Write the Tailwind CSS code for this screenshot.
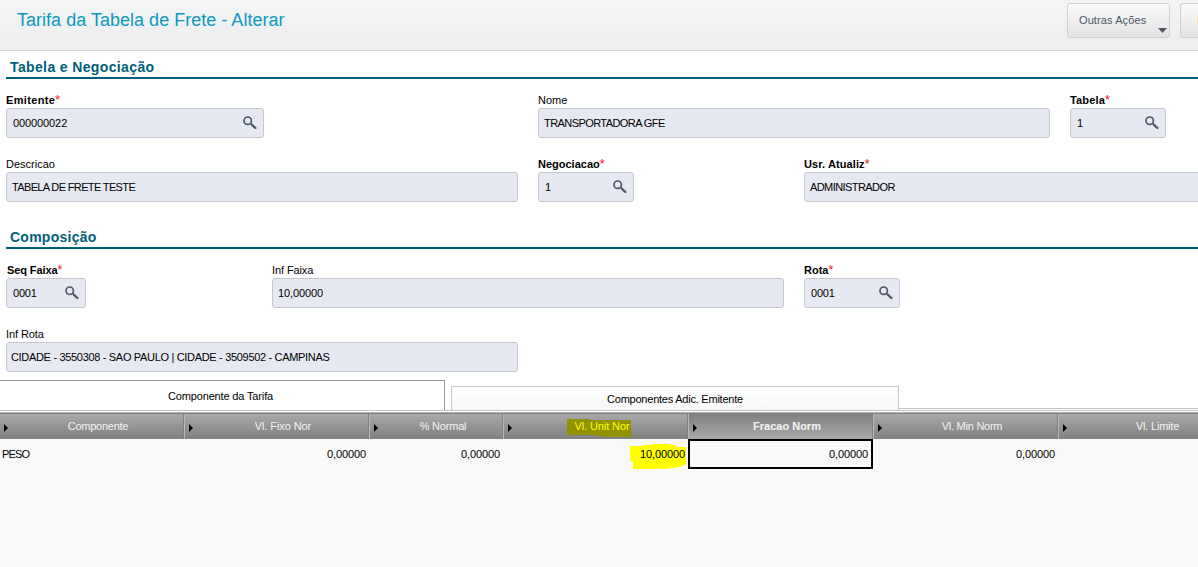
<!DOCTYPE html>
<html lang="pt-BR">
<head>
  <meta charset="UTF-8" />
  <meta name="viewport" content="width=device-width, initial-scale=1.0"/>
  <title>Tarifa da Tabela de Frete - Alterar</title>
  <script src="https://cdn.jsdelivr.net/npm/@tailwindcss/browser@4"></script>
</head>
<body class="w-[1198px] h-[567px] overflow-hidden bg-white text-black text-[11px] leading-[15px] font-['Liberation_Sans',Arial,sans-serif]">

  <!-- Lupa shared by the lookup fields -->
  <svg class="hidden">
    <symbol id="lupa" viewBox="0 0 14 14">
      <circle cx="4.7" cy="4.7" r="3.7" fill="none" stroke="#4d586a" stroke-width="1.7"/>
      <path d="M7.6 7.5 L9 8.9" fill="none" stroke="#4d586a" stroke-width="1.6"/>
      <path d="M9 8.8 L12.4 12" fill="none" stroke="#4d586a" stroke-width="2.3" stroke-linecap="round"/>
    </symbol>
  </svg>

  <div class="flex flex-col h-full overflow-hidden">

    <!-- Header -->
    <header class="h-[51px] shrink-0 flex justify-between border-b border-[#d5d6d7] bg-gradient-to-b from-[#f4f5f5] to-[#ecedee]">
      <h1 class="pl-[17px] pt-[8px] text-[18px] leading-6 tracking-[0.02px] text-[#0c9abe] whitespace-nowrap">Tarifa da Tabela de Frete - Alterar</h1>
      <div class="flex gap-[10px] pt-[3px]">
        <button class="relative w-[103px] h-[35px] border border-[#d0d1d2] rounded-[3px] bg-gradient-to-b from-[#fbfbfb] to-[#e3e3e3] text-[#4c5664] text-left pl-[11px] pb-px tracking-[0.1px] whitespace-nowrap">
          Outras Ações
          <svg class="absolute right-[2px] bottom-[4px] w-[9px] h-[5px]" viewBox="0 0 9 5"><path d="M0 0H9L4.5 5Z" fill="#4c5664"/></svg>
        </button>
        <div class="w-[18px] h-[35px] border border-r-0 border-[#d0d1d2] rounded-l-[3px] bg-gradient-to-b from-[#fbfbfb] to-[#e3e3e3] flex justify-end items-center">
          <span class="w-px h-[8px] mb-px bg-[#f5dfb0]"></span>
        </div>
      </div>
    </header>

    <!-- Tabela e Negociação -->
    <section class="pl-[6px] shrink-0 overflow-hidden">
      <h2 class="h-[28px] pt-[8px] pl-[4px] border-b-2 border-[#006078] text-[#006078] text-[14px] leading-4 tracking-[0.37px] font-bold">Tabela e Negociação</h2>

      <div class="grid grid-cols-[repeat(5,266px)] pt-[14px]">
        <div class="col-span-2">
          <label class="block h-[15px] font-bold tracking-[0.35px]">Emitente<span class="text-[12.5px] font-normal text-[#ff0020]">*</span></label>
          <div class="w-[258px] h-[30px] flex items-center justify-between pl-[6px] pr-[6px] border border-[#c3c8cc] rounded-[3px] bg-[#e6e9f1]">
            <span class="tracking-[-0.1px]">000000022</span>
            <svg class="w-[14px] h-[14px] mb-px"><use href="#lupa"/></svg>
          </div>
        </div>
        <div class="col-span-2">
          <label class="block h-[15px]">Nome</label>
          <div class="w-[512px] h-[30px] flex items-center pl-[5px] border border-[#c3c8cc] rounded-[3px] bg-[#e6e9f1] tracking-[-0.57px]">TRANSPORTADORA GFE</div>
        </div>
        <div>
          <label class="block h-[15px] font-bold tracking-[0.15px]">Tabela<span class="text-[12.5px] font-normal text-[#ff0020]">*</span></label>
          <div class="w-[96px] h-[30px] flex items-center justify-between pl-[6px] pr-[6px] border border-[#c3c8cc] rounded-[3px] bg-[#e6e9f1]">
            <span>1</span>
            <svg class="w-[14px] h-[14px] mb-px"><use href="#lupa"/></svg>
          </div>
        </div>
      </div>

      <div class="grid grid-cols-[repeat(5,266px)] pt-[19px]">
        <div class="col-span-2">
          <label class="block h-[15px]">Descricao</label>
          <div class="w-[512px] h-[30px] flex items-center pl-[5px] border border-[#c3c8cc] rounded-[3px] bg-[#e6e9f1] tracking-[-0.64px]">TABELA DE FRETE TESTE</div>
        </div>
        <div>
          <label class="block h-[15px] font-bold">Negociacao<span class="text-[12.5px] font-normal text-[#ff0020]">*</span></label>
          <div class="w-[96px] h-[30px] flex items-center justify-between pl-[6px] pr-[6px] border border-[#c3c8cc] rounded-[3px] bg-[#e6e9f1]">
            <span>1</span>
            <svg class="w-[14px] h-[14px] mb-px"><use href="#lupa"/></svg>
          </div>
        </div>
        <div class="col-span-2">
          <label class="block h-[15px] font-bold tracking-[0.1px]">Usr. Atualiz<span class="text-[12.5px] font-normal text-[#ff0020]">*</span></label>
          <div class="w-[512px] h-[30px] flex items-center pl-[5px] border border-[#c3c8cc] rounded-[3px] bg-[#e6e9f1] tracking-[-0.58px]">ADMINISTRADOR</div>
        </div>
      </div>
    </section>

    <!-- Composição -->
    <section class="pl-[6px] shrink-0 overflow-hidden">
      <h2 class="h-[47px] pt-[27px] pl-[4px] border-b-2 border-[#006078] text-[#006078] text-[14px] leading-4 tracking-[0.25px] font-bold">Composição</h2>

      <div class="grid grid-cols-[repeat(5,266px)] pt-[14px]">
        <div>
          <label class="block h-[15px] pl-px font-bold tracking-[-0.1px]">Seq Faixa<span class="text-[12.5px] font-normal text-[#ff0020]">*</span></label>
          <div class="w-[80px] h-[30px] flex items-center justify-between pl-[6px] pr-[6px] border border-[#c3c8cc] rounded-[3px] bg-[#e6e9f1]">
            <span class="tracking-[-0.2px]">0001</span>
            <svg class="w-[14px] h-[14px] mb-px"><use href="#lupa"/></svg>
          </div>
        </div>
        <div class="col-span-2">
          <label class="block h-[15px] tracking-[-0.1px]">Inf Faixa</label>
          <div class="w-[512px] h-[30px] flex items-center pl-[5px] border border-[#c3c8cc] rounded-[3px] bg-[#e6e9f1] tracking-[-0.1px]">10,00000</div>
        </div>
        <div>
          <label class="block h-[15px] font-bold">Rota<span class="text-[12.5px] font-normal text-[#ff0020]">*</span></label>
          <div class="w-[96px] h-[30px] flex items-center justify-between pl-[6px] pr-[6px] border border-[#c3c8cc] rounded-[3px] bg-[#e6e9f1]">
            <span class="tracking-[-0.2px]">0001</span>
            <svg class="w-[14px] h-[14px] mb-px"><use href="#lupa"/></svg>
          </div>
        </div>
      </div>

      <div class="pt-[19px]">
        <label class="block h-[15px] tracking-[-0.1px]">Inf Rota</label>
        <div class="w-[512px] h-[30px] flex items-center pl-[4px] border border-[#c3c8cc] rounded-[3px] bg-[#e6e9f1] tracking-[-0.32px]">CIDADE - 3550308 - SAO PAULO | CIDADE - 3509502 - CAMPINAS</div>
      </div>
    </section>

    <!-- Tabs -->
    <nav class="mt-[8px] h-[31px] shrink-0 flex items-end border-b border-[#c4c4c4]">
      <div class="w-[445px] h-[30px] mr-[6px] pt-[2px] flex items-center justify-center border-t border-r border-[#969696] pr-[3px] bg-white tracking-[-0.15px]">Componente da Tarifa</div>
      <div class="w-[448px] h-[24px] pt-[2px] flex items-center justify-center border border-b-0 border-[#c8c8c8] bg-gradient-to-b from-white to-[#f7f7f7] tracking-[-0.23px]">Componentes Adic. Emitente</div>
      <div class="flex-1 h-[2px] border-t border-[#c4c4c4]"></div>
    </nav>

    <!-- Grid -->
    <div class="flex-1 mt-px flex flex-col overflow-hidden bg-[#f9f9f9]">
      <div class="h-[27px] shrink-0 grid grid-cols-[184px_185px_134px_185px_185px_185px_187px] border-t border-[#b0b0b0] text-[#f4f4f4]">
        <div class="flex items-center border-t border-r border-[#808080] bg-gradient-to-b from-[#a9a9a9] to-[#808080] pl-[4px]">
          <svg class="w-[4px] h-[8px] mt-[2px]" viewBox="0 0 4 8"><path d="M0 0L4 4L0 8Z"/></svg>
          <span class="flex-1 text-center pl-[5px] tracking-[-0.25px]">Componente</span>
        </div>
        <div class="flex items-center border-t border-r border-[#808080] bg-gradient-to-b from-[#a9a9a9] to-[#808080]">
          <i class="w-px h-full bg-[#b8b8b8]"></i>
          <svg class="w-[4px] h-[8px] mt-[2px] ml-[4px]" viewBox="0 0 4 8"><path d="M0 0L4 4L0 8Z"/></svg>
          <span class="flex-1 text-center pl-[5px] tracking-[-0.1px]">Vl. Fixo Nor</span>
        </div>
        <div class="flex items-center border-t border-r border-[#808080] bg-gradient-to-b from-[#a9a9a9] to-[#808080]">
          <i class="w-px h-full bg-[#b8b8b8]"></i>
          <svg class="w-[4px] h-[8px] mt-[2px] ml-[4px]" viewBox="0 0 4 8"><path d="M0 0L4 4L0 8Z"/></svg>
          <span class="flex-1 text-center pl-[6px] tracking-[-0.2px]">% Normal</span>
        </div>
        <div class="flex items-center border-t border-r border-[#808080] bg-gradient-to-b from-[#a9a9a9] to-[#808080]">
          <i class="w-px h-full bg-[#b8b8b8]"></i>
          <svg class="w-[4px] h-[8px] mt-[2px] ml-[4px]" viewBox="0 0 4 8"><path d="M0 0L4 4L0 8Z"/></svg>
          <span class="flex-1 flex justify-center pl-[5px] tracking-[-0.1px]">
            <span class="relative text-[#ffff00]">
              <svg class="absolute -left-[7px] top-0 w-[64px] h-[19px]" viewBox="0 0 64 19"><path d="M0 0H23V1H64V18H38V17H30V16H0Z" fill="#929200"/></svg>
              <span class="relative">Vl. Unit Nor</span>
            </span>
          </span>
        </div>
        <div class="flex items-center border-t border-r border-[#808080] bg-gradient-to-b from-[#808080] to-[#a9a9a9] font-bold">
          <i class="w-px h-full bg-[#b8b8b8]"></i>
          <svg class="w-[4px] h-[8px] mt-[2px] ml-[4px]" viewBox="0 0 4 8"><path d="M0 0L4 4L0 8Z"/></svg>
          <span class="flex-1 text-center pl-[5px]">Fracao Norm</span>
        </div>
        <div class="flex items-center border-t border-r border-[#808080] bg-gradient-to-b from-[#a9a9a9] to-[#808080]">
          <i class="w-px h-full bg-[#b8b8b8]"></i>
          <svg class="w-[4px] h-[8px] mt-[2px] ml-[4px]" viewBox="0 0 4 8"><path d="M0 0L4 4L0 8Z"/></svg>
          <span class="flex-1 text-center pl-[5px] tracking-[-0.25px]">Vl. Min Norm</span>
        </div>
        <div class="flex items-center border-t border-r border-[#808080] bg-gradient-to-b from-[#a9a9a9] to-[#808080]">
          <i class="w-px h-full bg-[#b8b8b8]"></i>
          <svg class="w-[4px] h-[8px] mt-[2px] ml-[4px]" viewBox="0 0 4 8"><path d="M0 0L4 4L0 8Z"/></svg>
          <span class="flex-1 text-center pl-[4px] tracking-[-0.2px]">Vl. Limite</span>
        </div>
      </div>

      <div class="h-[30px] shrink-0 grid grid-cols-[184px_185px_134px_185px_185px_185px_187px] items-center tracking-[-0.12px]">
        <div class="pl-[2px] tracking-[-0.8px]">PESO</div>
        <div class="text-right pr-[3px]">0,00000</div>
        <div class="text-right pr-[3px]">0,00000</div>
        <div class="flex justify-end pr-[3px]">
          <span class="relative">
            <svg class="absolute -left-[10px] -top-[3px] w-[56px] h-[26px]" viewBox="0 0 56 26"><path d="M0 2H12V1H22V0H40V1H46V3H56V21H52V23H46V24H39V25H3V17H0Z" fill="#ffff00"/></svg>
            <span class="relative">10,00000</span>
          </span>
        </div>
        <div class="h-full flex items-center justify-end border-2 border-black pr-[3px]">0,00000</div>
        <div class="text-right pr-[3px]">0,00000</div>
      </div>
    </div>

  </div>
</body>
</html>
